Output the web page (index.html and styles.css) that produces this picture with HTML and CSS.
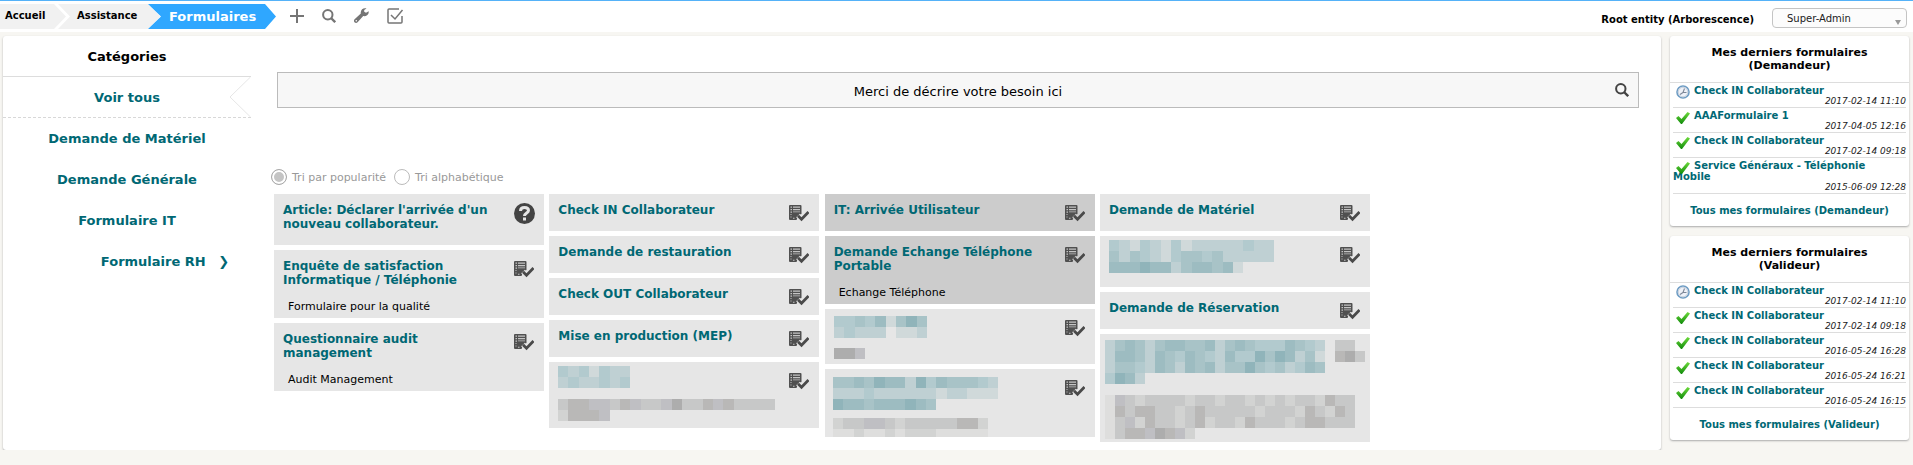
FILE: index.html
```html
<!DOCTYPE html>
<html lang="fr">
<head>
<meta charset="utf-8">
<title>Formulaires</title>
<link rel="stylesheet" href="styles.css">
</head>
<body>
<svg class="defs" width="0" height="0" aria-hidden="true">
  <defs>
    <symbol id="form" viewBox="0 0 20 17">
      <path fill="#505050" d="M1 0h10.500a1 1 0 0 1 1 1v8l-2 1-1.500 1.500-1.500 3.500H1a1 1 0 0 1-1-1V1a1 1 0 0 1 1-1z"/>
      <path fill="#c4c4c4" d="M1.500 1.500h1.500v1.200h-1.500zM4 1.500h7v1.200H4zM1.500 4h1.500v1.200h-1.500zM4 4h7v1.200H4zM1.500 6.500h1.500v1.200h-1.500zM4 6.500h7v.8H4zM1.500 9h1v1h-1zM1.500 11.500h1v1h-1zM4 12.800h1.500v1H4z"/>
      <path class="halo" fill="none" stroke-width="5" d="M9 10.500l3.500 3.800 7-7.300"/>
      <path fill="none" stroke="#4a4a4a" stroke-width="2.800" d="M9 10.800l3.500 3.500 7-7.300"/>
    </symbol>
    <symbol id="help" viewBox="0 0 21 21">
      <circle cx="10.500" cy="10.500" r="10.500" fill="#444"/>
      <path fill="none" stroke="#e6e6e6" stroke-width="3" d="M6.500 8C6.500 5.500 8 4.500 10.500 4.500s4 1.200 4 3c0 2.500-4 2.500-4 5.500"/>
      <path fill="#e6e6e6" d="M9 14.500h3v3H9z"/>
    </symbol>
    <symbol id="check" viewBox="0 0 14 12">
      <path fill="url(#green)" d="M0 6l2.500-2L5.500 7 11.500 0 14 1.500 6 12H5z"/>
    </symbol>
    <symbol id="clock" viewBox="0 0 14 14">
      <circle cx="7" cy="7" r="6" fill="#eef1f8" stroke="#6d9cc4" stroke-width="1.600"/>
      <circle cx="7" cy="7" r="4.800" fill="none" stroke="#c6d0dc" stroke-width="1"/>
      <path fill="none" stroke="#7d8798" stroke-width="1.100" d="M8.500 3.500L7 7.500h3.500M7 7.500l-3 2"/>
    </symbol>
    <symbol id="glass" viewBox="0 0 14 14">
      <circle cx="5.800" cy="5.800" r="4.700" fill="none" stroke="currentColor" stroke-width="2"/>
      <path stroke="currentColor" stroke-width="2.400" d="M9 9l4.200 4.200"/>
    </symbol>
    <linearGradient id="green" x1="0" y1="0" x2="0" y2="1">
      <stop offset="0" stop-color="#6fdc3c"/><stop offset="1" stop-color="#0f8a0a"/>
    </linearGradient>
  </defs>
</svg>

<header class="topbar">
  <nav class="crumbs" aria-label="Fil d'Ariane">
    <a class="crumb first" href="#">Accueil</a>
    <a class="crumb second" href="#">Assistance</a>
    <a class="crumb current" href="#">Formulaires</a>
  </nav>
  <div class="tools">
    <button type="button" aria-label="Ajouter"><svg width="14" height="14" viewBox="0 0 14 14"><path fill="none" stroke="currentColor" stroke-width="2" d="M7 0v14M0 7h14"/></svg></button>
    <button type="button" aria-label="Rechercher"><svg width="14" height="14"><use href="#glass"/></svg></button>
    <button type="button" aria-label="Configurer"><svg width="15" height="15" viewBox="0 0 15 15"><path fill="currentColor" d="M14.700 3.300l-2.700 1.500-1.800-1V2L12.500.4C10 -.5 6.800 1 6.700 4.500l.1 1L.6 11.200c-2 2.200 1 5 3 3l5.600-6.100c3 .6 6-1.600 5.500-4.800z"/><circle cx="2.300" cy="12.700" r=".8" fill="#fff"/></svg></button>
    <button type="button" aria-label="Valider"><svg width="17" height="16" viewBox="0 0 17 16"><path fill="none" stroke="currentColor" stroke-width="1.500" d="M12 1H2Q1 1 1 2v12q0 1 1 1h12q1 0 1-1V8M4 7l4 4 7.500-9"/></svg></button>
  </div>
  <div class="session">
    <a class="entity" href="#">Root entity (Arborescence)</a>
    <div class="profile">
      <select aria-label="Profil"><option>Super-Admin</option></select>
    </div>
  </div>
</header>

<div class="page">
  <main class="panel catalog">
    <nav class="categories">
      <h2>Catégories</h2>
      <a class="active" href="#">Voir tous<svg class="notch" width="22" height="40" viewBox="0 0 22 40"><path fill="#fff" stroke="#e6e6e6" d="M21.500 0L1 20l20.500 20"/></svg></a>
      <a href="#">Demande de Matériel</a>
      <a href="#">Demande Générale</a>
      <a href="#">Formulaire IT</a>
      <a class="parent" href="#">Formulaire RH <span>❯</span></a>
    </nav>

    <div class="content">
      <form class="search">
        <input type="text" aria-label="Recherche" placeholder="Merci de décrire votre besoin ici">
        <button type="submit" aria-label="Rechercher"><svg width="14" height="14"><use href="#glass"/></svg></button>
      </form>

      <div class="sort">
        <input type="radio" name="sort" id="popular" checked><label for="popular">Tri par popularité</label>
        <input type="radio" name="sort" id="alpha"><label for="alpha">Tri alphabétique</label>
      </div>

      <div class="cards">
        <div class="column">
          <article class="card"><a href="#">Article: Déclarer l'arrivée d'un nouveau collaborateur.</a><svg class="icon-help"><use href="#help"/></svg></article>
          <article class="card"><a href="#">Enquête de satisfaction Informatique / Téléphonie</a><svg class="icon"><use href="#form"/></svg><p>Formulaire pour la qualité</p></article>
          <article class="card"><a href="#">Questionnaire audit management</a><svg class="icon"><use href="#form"/></svg><p>Audit Management</p></article>
        </div>
        <div class="column">
          <article class="card"><a href="#">Check IN Collaborateur</a><svg class="icon"><use href="#form"/></svg></article>
          <article class="card"><a href="#">Demande de restauration</a><svg class="icon"><use href="#form"/></svg></article>
          <article class="card"><a href="#">Check OUT Collaborateur</a><svg class="icon"><use href="#form"/></svg></article>
          <article class="card"><a href="#">Mise en production (MEP)</a><svg class="icon"><use href="#form"/></svg></article>
          <article class="card masked m1"><svg class="icon"><use href="#form"/></svg>
            <div class="mosaic" data-cells="cbcacbb bcbbcbc"></div>
            <div class="mosaic" data-cells="oqqppoqpooprooqpqoooo nqqqp"></div>
          </article>
        </div>
        <div class="column">
          <article class="card hot"><a href="#">IT: Arrivée Utilisateur</a><svg class="icon"><use href="#form"/></svg></article>
          <article class="card hot"><a href="#">Demande Echange Téléphone Portable</a><svg class="icon"><use href="#form"/></svg><p>Echange Téléphone</p></article>
          <article class="card masked m2"><svg class="icon"><use href="#form"/></svg>
            <div class="mosaic" data-cells="ccdceadfd bcbbb.aab"></div>
            <div class="mosaic" data-cells="rrp"></div>
          </article>
          <article class="card masked m3"><svg class="icon"><use href="#form"/></svg>
            <div class="mosaic" data-cells="ddedfeebfcedddcb bbbcbbbbbbabbaaa feedeeefed"></div>
            <div class="mosaic" data-cells="noopponoooooqqn mmnmmnmnnnmmmmm"></div>
          </article>
        </div>
        <div class="column">
          <article class="card"><a href="#">Demande de Matériel</a><svg class="icon"><use href="#form"/></svg></article>
          <article class="card masked m4"><svg class="icon"><use href="#form"/></svg>
            <div class="mosaic" data-cells="cbacbacabbbbbcbb dbdcbacddcdbbbbb eeefeebdeedea"></div>
          </article>
          <article class="card"><a href="#">Demande de Réservation</a><svg class="icon"><use href="#form"/></svg></article>
          <article class="card masked m5">
            <div class="mosaic" data-cell="10" data-cells="bdedbdeeddebdedcccedcb.oo beedbedcedcbeccfdfebda.qro bddcbedbedebddfdcdbced cfeb"></div>
            <div class="mosaic" data-cell="10" data-cells="mponoooonoonoonononoonqoo mqoqqoonoqooooonooonqonqo mopnqoonoqnoonqooonoqqooo moqqprqpn"></div>
          </article>
        </div>
      </div>
    </div>
  </main>

  <aside class="recent">
    <section class="panel">
      <h2>Mes derniers formulaires (Demandeur)</h2>
      <ul>
        <li><svg class="clock"><use href="#clock"/></svg><a href="#">Check IN Collaborateur</a><time>2017-02-14 11:10</time></li>
        <li><svg class="check"><use href="#check"/></svg><a href="#">AAAFormulaire 1</a><time>2017-04-05 12:16</time></li>
        <li><svg class="check"><use href="#check"/></svg><a href="#">Check IN Collaborateur</a><time>2017-02-14 09:18</time></li>
        <li><svg class="check"><use href="#check"/></svg><a href="#">Service Généraux - Téléphonie Mobile</a><time>2015-06-09 12:28</time></li>
      </ul>
      <a class="all" href="#">Tous mes formulaires (Demandeur)</a>
    </section>
    <section class="panel">
      <h2>Mes derniers formulaires (Valideur)</h2>
      <ul>
        <li><svg class="clock"><use href="#clock"/></svg><a href="#">Check IN Collaborateur</a><time>2017-02-14 11:10</time></li>
        <li><svg class="check"><use href="#check"/></svg><a href="#">Check IN Collaborateur</a><time>2017-02-14 09:18</time></li>
        <li><svg class="check"><use href="#check"/></svg><a href="#">Check IN Collaborateur</a><time>2016-05-24 16:28</time></li>
        <li><svg class="check"><use href="#check"/></svg><a href="#">Check IN Collaborateur</a><time>2016-05-24 16:21</time></li>
        <li><svg class="check"><use href="#check"/></svg><a href="#">Check IN Collaborateur</a><time>2016-05-24 16:15</time></li>
      </ul>
      <a class="all" href="#">Tous mes formulaires (Valideur)</a>
    </section>
  </aside>
</div>
<script src="mosaic.js"></script>
</body>
</html>
```
FILE: mosaic.js
```js
// Draws the pixelated blocks that hide confidential titles: one letter per cell, rows split by spaces.
const tones = {
  a: '#d0d9da', b: '#bfd0d3', c: '#b2cace', d: '#a8c3c7', e: '#9dbcc1', f: '#90b4ba',
  m: '#dededd', n: '#d2d3d2', o: '#c7c8c8', p: '#bfbfc3', q: '#b9b8b7', r: '#adadad'
};
const cellHeight = 11;
const ns = 'http://www.w3.org/2000/svg';
for (const box of document.querySelectorAll('.mosaic')) {
  const cellWidth = Number(box.dataset.cell) || 31 / 3;
  const rows = box.dataset.cells.split(' ');
  const columns = Math.max(...rows.map(row => row.length));
  const svg = document.createElementNS(ns, 'svg');
  svg.setAttribute('width', Math.round(columns * cellWidth));
  svg.setAttribute('height', rows.length * cellHeight);
  svg.setAttribute('shape-rendering', 'crispEdges');
  rows.forEach((row, y) => [...row].forEach((tone, x) => {
    if (!tones[tone]) return;
    const rect = document.createElementNS(ns, 'rect');
    const left = Math.round(x * cellWidth);
    rect.setAttribute('x', left);
    rect.setAttribute('y', y * cellHeight);
    rect.setAttribute('width', Math.round((x + 1) * cellWidth) - left);
    rect.setAttribute('height', cellHeight);
    rect.setAttribute('fill', tones[tone]);
    svg.append(rect);
  }));
  box.append(svg);
}
```
FILE: styles.css
```css
* { box-sizing: border-box; }
body {
  margin: 0;
  background: #f7f6f2;
  color: #000;
  font: 11px/13px "DejaVu Sans", sans-serif;
}
a { color: #006874; font-weight: bold; text-decoration: none; }
button { padding: 0; border: 0; background: none; color: inherit; }
svg { display: block; }
h2 { margin: 0; font-weight: bold; text-align: center; }
.defs { position: absolute; }

.topbar {
  display: flex;
  align-items: flex-start;
  height: 32px;
  border-top: 1px solid #55b2f8;
  background: #fff;
}
.crumbs { display: flex; padding-top: 3px; }
.crumb {
  height: 25px;
  background: #f1f1f1;
  color: #000;
  font-size: 10px;
  line-height: 23px;
}
.first {
  width: 66px;
  padding-left: 5px;
  clip-path: polygon(0 0, 54px 0, 66px 50%, 54px 100%, 0 100%);
}
.second {
  width: 105px;
  margin-left: -11px;
  padding-left: 22px;
  clip-path: polygon(3px 0, 93px 0, 105px 50%, 93px 100%, 3px 100%, 15px 50%);
}
.current {
  width: 128px;
  margin-left: -12px;
  padding-left: 21px;
  background: #2fa7ff;
  color: #fff;
  font-size: 13px;
  line-height: 25px;
  clip-path: polygon(0 0, 117px 0, 100% 50%, 117px 100%, 0 100%, 13px 50%);
}
.tools { display: flex; align-items: center; gap: 18px; height: 29px; padding-left: 14px; color: #757575; }
.session { display: flex; gap: 18px; margin-left: auto; padding: 7px 6px 0 0; }
.entity { padding-top: 5px; color: #000; font-size: 10px; }
.profile { position: relative; }
.profile::after {
  content: "";
  position: absolute;
  right: 6px;
  bottom: 3px;
  border: 3px solid transparent;
  border-top: 5px solid #999;
  border-bottom: 0;
}
.profile select {
  display: block;
  width: 135px;
  height: 20px;
  padding: 1px 14px 0;
  appearance: none;
  border: 1px solid #c4c4c4;
  border-radius: 4px;
  background: #fcfcfc;
  color: #222;
  font: 10px/18px "DejaVu Sans", sans-serif;
}

.page { display: flex; align-items: flex-start; gap: 9px; padding: 4px 4px 0 3px; }
.panel { border-radius: 3px; background: #fff; box-shadow: 0 1px 2px #aaa; }
.catalog { display: flex; flex: 1; padding-bottom: 8px; }

.categories { width: 248px; font-size: 13px; line-height: 38px; text-align: center; }
.categories h2 { padding-top: 2px; border-bottom: 1px solid #ddd; font-size: 13px; }
.categories a { display: block; padding-top: 2px; border-bottom: 1px solid transparent; }
.categories .active { position: relative; border-bottom: 1px dashed #d8d8d8; }
.notch { position: absolute; top: 0; right: 0; }
.categories .parent { padding-left: 76px; }
.parent span { margin-left: 8px; }

.content { flex: 1; padding: 36px 22px 0 23px; }
.search { display: flex; margin-left: 3px; height: 36px; border: 1px solid #bbb; background: #f7f7f7; }
.search input {
  flex: 1;
  padding: 2px 0 0 32px;
  border: 0;
  background: none;
  font: 13px "DejaVu Sans", sans-serif;
  text-align: center;
}
.search input::placeholder { color: #000; opacity: 1; }
.search button { width: 32px; padding-left: 9px; color: #444; }

.sort { display: flex; align-items: center; height: 16px; margin: 61px 0 9px -3px; color: #999; }
.sort input {
  width: 16px;
  height: 16px;
  margin: 0;
  appearance: none;
  border: 1px solid #bbb;
  border-radius: 50%;
  background: #fff;
}
.sort input:checked { border-color: #aaa; background: #c4c4c4; box-shadow: inset 0 0 0 2px #fff; }
.sort label { margin: 0 8px 0 5px; }

.cards { display: grid; grid-template-columns: repeat(4, 270px); justify-content: space-between; max-width: 1096px; }
.column { display: flex; flex-direction: column; gap: 5px; }
.card {
  --card: #e6e6e6;
  position: relative;
  min-height: 37px;
  padding: 9px 49px 5px 9px;
  background: var(--card);
  font-size: 12px;
  line-height: 14px;
}
.card.hot { --card: #ccc; }
.halo { stroke: var(--card); }
.card a { display: block; margin-bottom: 9px; }
.card p { margin: 13px 5px 0; font-size: 11px; line-height: 13px; }
.icon, .icon-help { position: absolute; top: 11px; right: 10px; width: 20px; height: 17px; }
.icon-help { top: 9px; right: 9px; height: 21px; width: 21px; }
.masked { display: flex; flex-direction: column; gap: 11px; padding: 4px 0 7px 9px; }
.m2 { gap: 10px; padding: 7px 0 5px 9px; }
.m3 { gap: 8px; height: 68px; padding: 8px 0 0 8px; overflow: hidden; }
.m4 { padding-bottom: 14px; }
.m5 { padding: 6px 0 3px 5px; }

.recent { display: flex; flex-direction: column; gap: 10px; width: 239px; }
.recent h2 { padding: 10px 40px 10px; border-bottom: 1px solid #ddd; font-size: 11px; }
.recent ul { margin: 0 3px; padding: 0; list-style: none; }
.recent li { position: relative; padding-top: 2px; border-bottom: 1px solid #ddd; }
.recent li a { display: block; padding-right: 20px; font-size: 10px; line-height: 11px; text-indent: 21px; }
.recent time { display: block; color: #222; font-size: 9px; font-style: italic; line-height: 11px; text-align: right; }
.clock, .check { position: absolute; top: 2px; left: 3px; width: 14px; height: 14px; }
.check { top: 4px; height: 12px; }
.all { display: block; padding: 10px 0 9px; font-size: 10px; text-align: center; }
```
